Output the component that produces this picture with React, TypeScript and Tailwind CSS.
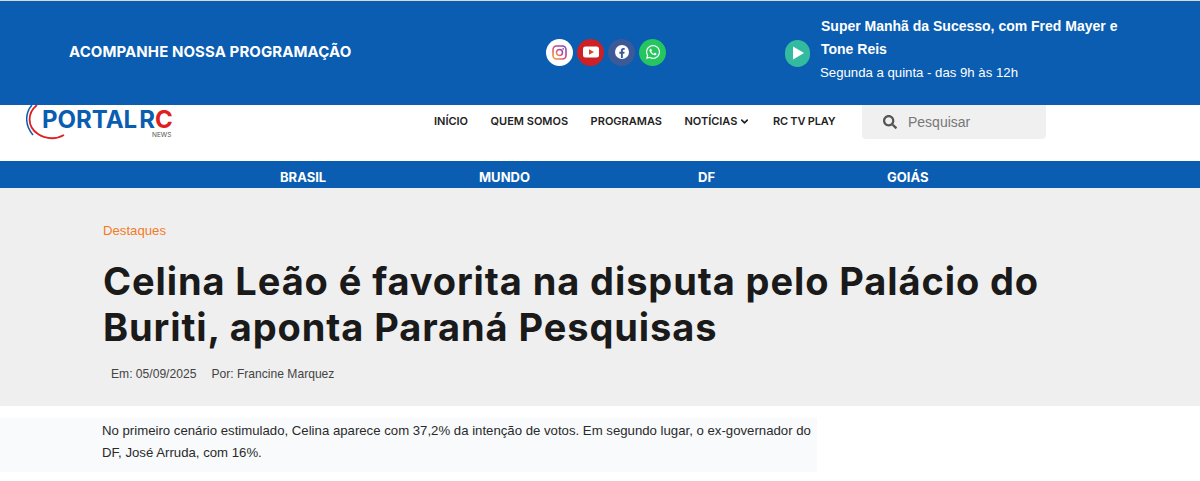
import React from "react";
import { ChevronDown } from "lucide-react";
import { FaFacebookF, FaSearch, FaWhatsapp } from "react-icons/fa";

const Logo = () => (
  <div className="relative w-[150px] h-[36px] overflow-hidden">
    <svg className="absolute left-0 top-0" width="60" height="36" viewBox="0 0 60 36" fill="none">
      <path d="M6 0 C-1 8 -1.5 20 7 30" stroke="#0a5db0" strokeWidth="1.5" />
      <path d="M11 0 C1 8 1 22 12 29 C21 35 31 34 38 30" stroke="#e02020" strokeWidth="1.8" />
    </svg>
    <div className="absolute left-[16px] top-[4px] flex text-[24px] leading-[22px] font-bold font-['Inter',sans-serif]">
      <span className="text-[#0a5db0]">PORTAL</span>
      <span className="text-[#0a5db0] ml-[2px]">R</span>
      <span className="text-[#e02020]">C</span>
    </div>
    <span className="absolute left-[126px] top-[27px] text-[6.5px] leading-[7px] text-[#555] font-['Inter',sans-serif]">NEWS</span>
  </div>
);

const SocialIcons = () => (
  <div className="flex items-center gap-[4px]">
    <span className="w-[27px] h-[27px] rounded-full bg-white flex items-center justify-center">
      <svg width="15" height="15" viewBox="0 0 15 15" fill="none">
        <defs>
          <linearGradient id="ig" x1="0" y1="1" x2="1" y2="0">
            <stop offset="0" stopColor="#f5a33b" />
            <stop offset="0.5" stopColor="#d1457f" />
            <stop offset="1" stopColor="#7a4cc4" />
          </linearGradient>
        </defs>
        <rect x="1" y="1" width="13" height="13" rx="3.5" stroke="url(#ig)" strokeWidth="1.6" />
        <circle cx="7.5" cy="7.5" r="3" stroke="url(#ig)" strokeWidth="1.5" />
        <circle cx="11.2" cy="3.8" r="0.9" fill="#a14bb0" />
      </svg>
    </span>
    <span className="w-[27px] h-[27px] rounded-full bg-[#cd2027] flex items-center justify-center">
      <svg width="16" height="12" viewBox="0 0 16 12">
        <rect x="0" y="0.5" width="16" height="11" rx="2.5" fill="#fff" />
        <path d="M6 3.2 L11 6 L6 8.8 Z" fill="#d9452b" />
      </svg>
    </span>
    <span className="w-[27px] h-[27px] rounded-full bg-[#3d5a98] flex items-center justify-center">
      <span className="w-[14px] h-[14px] rounded-full bg-white flex items-center justify-center overflow-hidden">
        <FaFacebookF className="w-[10px] h-[10px] text-[#3d5a98] mt-[2px]" />
      </span>
    </span>
    <span className="w-[27px] h-[27px] rounded-full bg-[#25c55f] flex items-center justify-center">
      <FaWhatsapp className="w-[16px] h-[16px] text-white" />
    </span>
  </div>
);

const navItems = ["INÍCIO", "QUEM SOMOS", "PROGRAMAS"];

export default function App() {
  return (
    <div className="w-[1200px] h-[481px] overflow-hidden bg-white font-['Liberation_Sans',sans-serif]">
      <div className="h-px bg-[#d8d8d8]" />

      <div className="h-[104px] bg-[#0a5db0] flex items-center">
        <div className="w-[546px] pl-[69px] pb-[1px]">
          <h3 className="text-white text-[15px] font-bold tracking-[0.08px] font-['Inter',sans-serif]">ACOMPANHE NOSSA PROGRAMAÇÃO</h3>
        </div>
        <div className="w-[239px] pb-[2px]">
          <SocialIcons />
        </div>
        <div className="flex items-center gap-[11px]">
          <span className="w-[25px] h-[27px] rounded-full bg-[#33bb9f] flex items-center justify-center">
            <svg width="14" height="16" viewBox="0 0 14 16">
              <path d="M2 1.5 L13 8 L2 14.5 Z" fill="#fff" />
            </svg>
          </span>
          <div className="w-[310px] -mt-[8px]">
            <p className="text-white text-[14px] font-bold leading-[23.5px]">Super Manhã da Sucesso, com Fred Mayer e Tone Reis</p>
            <p className="text-white text-[13.2px] leading-[22px] -ml-[1px]">Segunda a quinta - das 9h às 12h</p>
          </div>
        </div>
      </div>

      <div className="h-[56px] flex items-start">
        <div className="w-[434px] pl-[26px]">
          <Logo />
        </div>
        <nav className="w-[400px] flex items-center gap-[22.5px] pt-[9px] text-[11px] font-semibold text-[#222] whitespace-nowrap font-['Inter',sans-serif]">
          {navItems.map((item) => (
            <a key={item} className="leading-[14px]">{item}</a>
          ))}
          <a className="flex items-center gap-[2px] leading-[14px]">
            NOTÍCIAS
            <ChevronDown className="w-[11px] h-[11px]" strokeWidth={3.5} />
          </a>
          <a className="leading-[14px] tracking-[-0.2px]">RC TV PLAY</a>
        </nav>
        <div className="ml-[28px] w-[184px] h-[34px] bg-[#f0f0f0] rounded-b-[4px] flex items-center pl-[21px] gap-[11px]">
          <FaSearch className="w-[14px] h-[14px] text-[#555]" />
          <span className="text-[14px] text-[#777]">Pesquisar</span>
        </div>
      </div>

      <div className="h-[27px] bg-[#0a5db0] flex items-center pt-[7px] text-white text-[13px] font-bold font-['Inter',sans-serif]">
        <span className="ml-[280px] w-[199px]">BRASIL</span>
        <span className="w-[219px]">MUNDO</span>
        <span className="w-[189px]">DF</span>
        <span>GOIÁS</span>
      </div>

      <div className="h-[218px] bg-[#efefef] pl-[103px] pt-[34px]">
        <p className="text-[13.2px] leading-[17px] text-[#f47a1f]">Destaques</p>
        <h1 className="mt-[19px] w-[990px] text-[38px] leading-[46px] font-bold text-[#1a1a1a] font-['Inter',sans-serif] tracking-[0.9px]">
          Celina Leão é favorita na disputa pelo Palácio do Buriti, aponta Paraná Pesquisas
        </h1>
        <div className="mt-[16px] ml-[8px] flex gap-[15px] text-[12.1px] leading-[16px] text-[#444]">
          <span>Em: 05/09/2025</span>
          <span>Por: Francine Marquez</span>
        </div>
      </div>

      <div className="mt-[12px] w-[817px] h-[54px] bg-[#f8fafc] pl-[102px] pt-[2px] text-[13.2px] leading-[22px] text-[#2a2a2a]">
        <p className="w-[712px]">No primeiro cenário estimulado, Celina aparece com 37,2% da intenção de votos. Em segundo lugar, o ex-governador do DF, José Arruda, com 16%.</p>
      </div>
    </div>
  );
}
